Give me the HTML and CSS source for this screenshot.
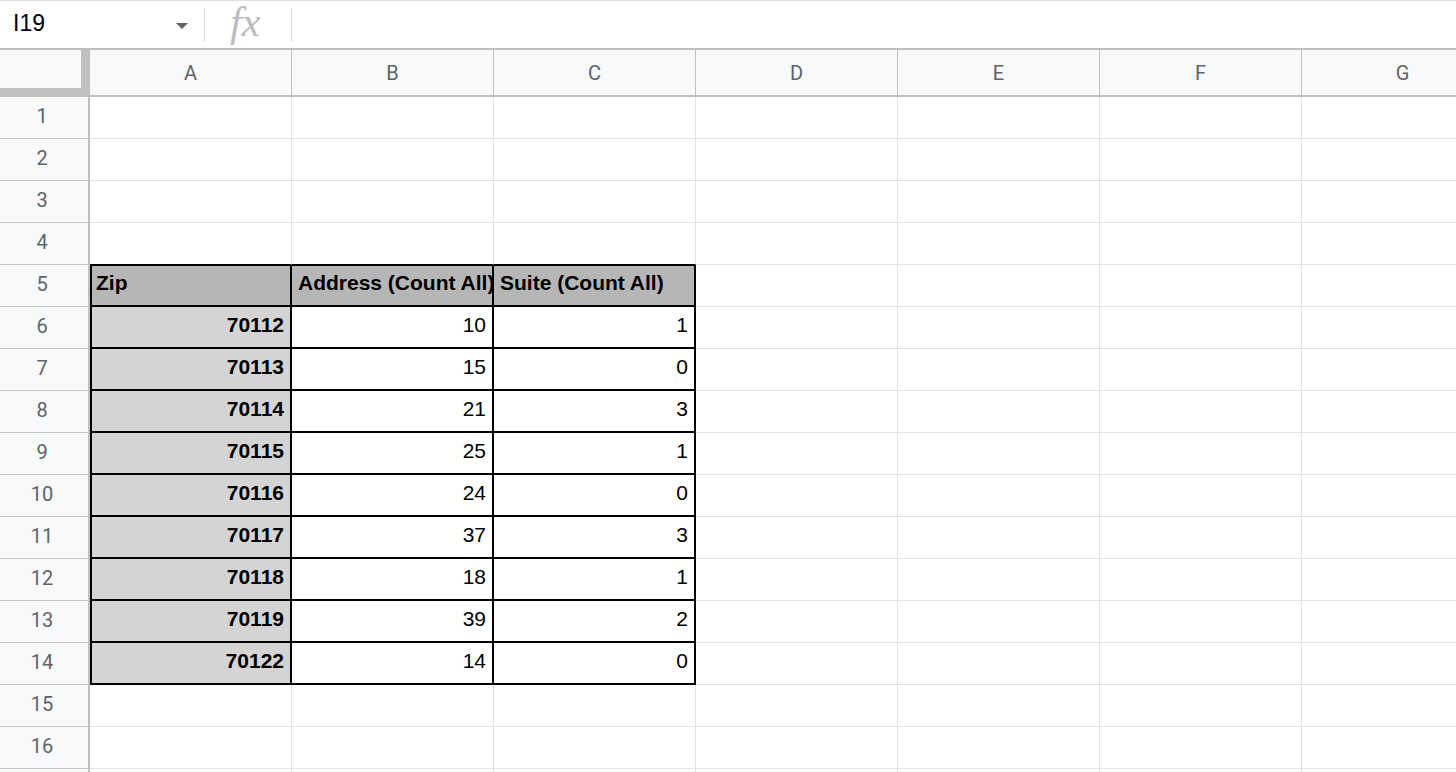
FILE: index.html
```html
<!DOCTYPE html>
<html lang="en">
<head>
    <meta charset="UTF-8">
    <meta name="viewport" content="width=device-width, initial-scale=1.0">
    <title>Zip counts - Sheet</title>
    <link rel="stylesheet" href="styles.css">
</head>
<body>

<div class="formula-bar">
    <div class="name-box">
        <span class="cell-ref">I19</span>
        <span class="caret"></span>
    </div>
    <div class="sep"></div>
    <div class="fx">fx</div>
    <div class="sep"></div>
    <div class="formula-input"></div>
</div>

<div class="sheet" id="sheet"></div>

<script>
    const cols = ["A", "B", "C", "D", "E", "F", "G"];
    const rowCount = 16;

    // pivot table, starts at A5
    const header = ["Zip", "Address (Count All)", "Suite (Count All)"];
    const data = [
        ["70112", "10", "1"],
        ["70113", "15", "0"],
        ["70114", "21", "3"],
        ["70115", "25", "1"],
        ["70116", "24", "0"],
        ["70117", "37", "3"],
        ["70118", "18", "1"],
        ["70119", "39", "2"],
        ["70122", "14", "0"]
    ];
    const firstRow = 5;
    const lastRow = firstRow + data.length;

    let sheet = document.getElementById("sheet");

    function addDiv(className, text) {
        let div = document.createElement("div");
        div.className = className;
        if (text !== undefined) {
            let span = document.createElement("span");
            span.innerText = text;
            div.appendChild(span);
        }
        sheet.appendChild(div);
        return div;
    }

    addDiv("corner");
    cols.forEach(c => addDiv("col-head", c));

    for (let r = 1; r <= rowCount; r++) {
        addDiv("row-head", r);
        for (let c = 0; c < cols.length; c++) {
            let cls = "cell";
            let text;
            let inTable = c < header.length && r >= firstRow && r <= lastRow;

            if (inTable) {
                cls += " tbl";
                if (c === 0) cls += " tbl-left";
                if (r === firstRow) {
                    cls += " tbl-top head";
                    text = header[c];
                } else {
                    text = data[r - firstRow - 1][c];
                    if (c === 0) cls += " zip";
                }
            } else if (c < header.length && r === firstRow - 1) {
                cls += " above-tbl";
            }
            addDiv(cls, text);
        }
    }

    // next row only peeks in at the bottom edge
    addDiv("row-head");
    cols.forEach(() => addDiv("cell"));
</script>

</body>
</html>
```

FILE: styles.css
```css
body {
    margin: 0;
    font-family: 'Liberation Sans', Arial, sans-serif;
    background: #fff;
    overflow: hidden;
}
.formula-bar {
    height: 48px;
    box-sizing: border-box;
    border-top: 1px solid #e0e0e0;
    display: flex;
    align-items: center;
}
.name-box {
    width: 204px;
    box-sizing: border-box;
    padding: 0 16px 0 13px;
    display: flex;
    align-items: center;
    justify-content: space-between;
    font-size: 23px;
    color: #000;
}
.cell-ref {
    margin-top: -2px;
}
.caret {
    width: 0;
    height: 0;
    border-left: 6px solid transparent;
    border-right: 6px solid transparent;
    border-top: 6px solid #5f6368;
    margin-top: 3px;
}
.sep {
    width: 1px;
    height: 34px;
    background: #e0e0e0;
}
.fx {
    width: 86px;
    box-sizing: border-box;
    padding-left: 25px;
    font-family: 'Liberation Serif', serif;
    font-style: italic;
    font-size: 42px;
    line-height: 40px;
    color: #bcbcbc;
    margin-top: -6px;
}
.formula-input {
    flex: 1;
}

.sheet {
    display: grid;
    width: max-content;
    grid-template-columns: 90px repeat(7, 202px);
    grid-template-rows: 49px;
    grid-auto-rows: 42px;
}
.sheet > div {
    box-sizing: border-box;
    overflow: hidden;
    white-space: nowrap;
}
.corner {
    background: #f8f9fa;
    border-top: 2px solid #c0c0c0;
    border-right: 9px solid #c0c0c0;
    border-bottom: 9px solid #c0c0c0;
}
.col-head {
    background: #f8f9fa;
    border-top: 2px solid #c0c0c0;
    border-bottom: 2px solid #c0c0c0;
    border-right: 1px solid #c0c0c0;
    display: flex;
    align-items: center;
    justify-content: center;
    font-family: Roboto, 'Liberation Sans', sans-serif;
    font-size: 20px;
    color: #5f6368;
}
.row-head {
    background: #f8f9fa;
    border-right: 2px solid #c0c0c0;
    border-bottom: 1px solid #c4c4c4;
    display: flex;
    align-items: center;
    justify-content: center;
    padding: 0 4px 4px 0;
    font-family: Roboto, 'Liberation Sans', sans-serif;
    font-size: 20px;
    color: #5f6368;
}
.cell {
    border-right: 1px solid #e2e2e2;
    border-bottom: 1px solid #e2e2e2;
    display: flex;
    align-items: center;
    justify-content: flex-end;
    padding: 0 6px 4px 6px;
    font-size: 21px;
    color: #000;
}
.above-tbl {
    border-bottom-color: #000;
}
.tbl {
    border-right: 2px solid #000;
    border-bottom: 2px solid #000;
}
.tbl-top {
    box-shadow: inset 0 1px 0 #000;
}
.tbl-left {
    box-shadow: inset 2px 0 0 #000;
}
.tbl-left.tbl-top {
    box-shadow: inset 2px 1px 0 #000;
}
.head {
    background: #b6b6b6;
    font-weight: bold;
    justify-content: flex-start;
}
.zip {
    background: #d4d4d4;
    font-weight: bold;
}
```
